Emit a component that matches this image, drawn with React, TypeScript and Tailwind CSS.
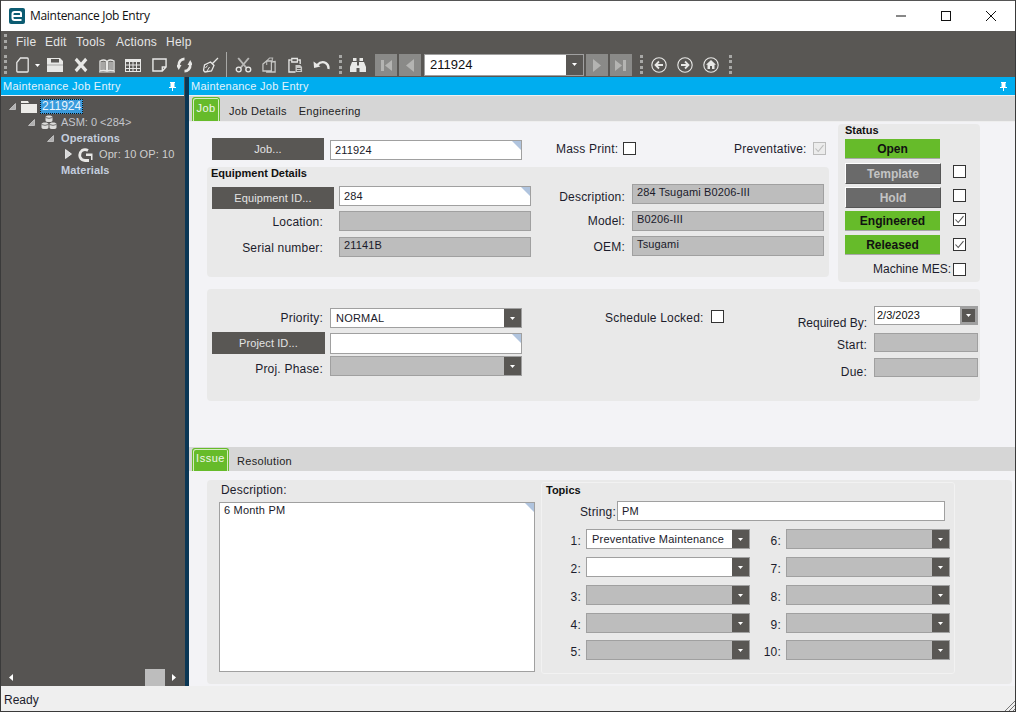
import React from "react";

const F = "#e8e8e6";

function Grip({ className = "" }: { className?: string }) {
  return <div className={"w-[3px] border-l-[3px] border-dotted border-[#a8a8a6] " + className} />;
}

function Tri({ className = "" }: { className?: string }) {
  return (
    <svg viewBox="0 0 5 3" className={"w-[5px] h-[3px] " + className}>
      <path d="M0 0h5L2.5 3z" fill="#fff" />
    </svg>
  );
}

function Ico({ w, ml, children }: { w: string; ml: string; children: React.ReactNode }) {
  return (
    <svg viewBox="0 0 16 16" preserveAspectRatio="none" className={w + " " + ml + " h-[16px] shrink-0"}>
      {children}
    </svg>
  );
}

function NavBtn({ ml, children }: { ml: string; children: React.ReactNode }) {
  return (
    <div className={ml + " w-[22px] h-[22px] bg-[#8a8a88] flex items-center justify-center shrink-0"}>
      <svg viewBox="0 0 16 16" className="w-[16px] h-[16px]">
        {children}
      </svg>
    </div>
  );
}

function Corner() {
  return <div className="absolute top-0 right-0 w-[9px] h-[9px] bg-[#b0c4de] [clip-path:polygon(0_0,100%_0,100%_100%)]" />;
}

function Field({
  className = "",
  text = "",
  gray = false,
  corner = false,
  center = true,
}: {
  className?: string;
  text?: string;
  gray?: boolean;
  corner?: boolean;
  center?: boolean;
}) {
  return (
    <div
      className={
        "relative shrink-0 border border-[#a0a0a0] px-[4px] text-[11px] leading-[14px] tracking-[0.15px] text-[#1a1a2a] flex " +
        (center ? "items-center " : "items-start ") +
        (gray ? "bg-[#bdbdbd] " : "bg-white ") +
        className
      }
    >
      {text}
      {corner && <Corner />}
    </div>
  );
}

function Select({ className = "", text = "", gray = false }: { className?: string; text?: string; gray?: boolean }) {
  return (
    <div
      className={
        "shrink-0 border border-[#a0a0a0] flex items-stretch text-[11px] tracking-[0.2px] text-[#1a1a2a] " +
        (gray ? "bg-[#bdbdbd] " : "bg-white ") +
        className
      }
    >
      <div className="flex-1 px-[5px] flex items-center whitespace-nowrap overflow-hidden">{text}</div>
      <div className="w-[17px] bg-[#595754] flex items-center justify-center">
        <Tri />
      </div>
    </div>
  );
}

function Label({ className = "", children }: { className?: string; children: React.ReactNode }) {
  return <div className={"shrink-0 text-[12px] leading-[14px] tracking-[0.2px] text-[#1c1c2c] text-right whitespace-nowrap " + className}>{children}</div>;
}

function Dark({ className = "", children }: { className?: string; children: React.ReactNode }) {
  return (
    <div className={"shrink-0 bg-[#595754] text-[#e4e4e4] text-[11px] tracking-[0.1px] flex items-center justify-center " + className}>
      {children}
    </div>
  );
}

function Check({ className = "", checked = false, disabled = false }: { className?: string; checked?: boolean; disabled?: boolean }) {
  return (
    <div
      className={
        "w-[13px] h-[13px] shrink-0 border flex items-center justify-center " +
        (disabled ? "border-[#bcbcbc] bg-[#ececec] " : "border-[#333] bg-white ") +
        className
      }
    >
      {checked && (
        <svg viewBox="0 0 11 11" className="w-[11px] h-[11px]">
          <path d="M1.5 5.5 4.2 8.5 9.5 2.2" fill="none" stroke={disabled ? "#bcbcbc" : "#555"} strokeWidth="1.1" />
        </svg>
      )}
    </div>
  );
}

function StatusBtn({ text, on, className = "" }: { text: string; on: boolean; className?: string }) {
  return on ? (
    <div className={"w-[95px] h-[20px] bg-[#66bb2a] border-b border-[#a8a8a8] text-[12px] font-bold text-[#111] flex items-center justify-center shrink-0 " + className}>
      {text}
    </div>
  ) : (
    <div
      className={
        "w-[96px] h-[21px] bg-[#6a6a6a] border-t border-l border-white border-r border-b border-r-[#555] border-b-[#555] text-[12px] font-bold text-[#c4c4c4] flex items-center justify-center shrink-0 " +
        className
      }
    >
      {text}
    </div>
  );
}

function ActiveTab({ className = "", text }: { className?: string; text: string }) {
  return (
    <div
      className={
        "bg-[#66bb2a] border border-[#66bb2a] border-b-0 rounded-t-[3px] shadow-[inset_1px_1px_0_#d4ecc0,inset_-1px_0_0_#d4ecc0] text-[#f0f6ea] text-[11px] tracking-[0.5px] flex items-center justify-center pb-[3px] shrink-0 " +
        className
      }
    >
      {text}
    </div>
  );
}

function TreeArrow() {
  return (
    <svg viewBox="0 0 7 7" className="w-[7px] h-[7px] shrink-0">
      <path d="M6.5.5v6h-6z" fill="#b0b0b0" stroke="#e0e0e0" strokeWidth=".6" />
    </svg>
  );
}

function DockHeader() {
  return (
    <div className="h-[18px] shrink-0 bg-[#00adef] flex items-center justify-between pl-[2px] pr-[8px] text-[11px] tracking-[0.25px] text-[#e4f4fc]">
      <span>Maintenance Job Entry</span>
      <svg viewBox="0 0 7 9" className="w-[7px] h-[9px]">
        <path d="M1 0h5v1h-.5v4H7v1H4v3H3V6H0V5h1.500V1H1z" fill="#fff" />
      </svg>
    </div>
  );
}

function TopicCol({ labels, grays, lx, first }: { labels: string[]; grays: boolean[]; lx: string; first?: string }) {
  const mts = ["", "mt-[8px]", "mt-[8px]", "mt-[8px]", "mt-[7px]"];
  return (
    <div className={"flex flex-col " + lx}>
      {labels.map((l, i) => (
        <div key={l} className={"flex items-center " + mts[i]}>
          <Label className="w-[28px] translate-y-[2px]">{l}</Label>
          <Select className="w-[164px] h-[20px] ml-[5px]" gray={grays[i]} text={i === 0 ? first : ""} />
        </div>
      ))}
    </div>
  );
}

export default function App() {
  return (
    <div className="w-[1016px] h-[712px] overflow-hidden flex flex-col bg-white border-l border-r border-b border-[#3a3a3a] font-['Liberation_Sans',Arial,sans-serif]">
      {/* title bar */}
      <div className="h-[31px] shrink-0 flex items-center border-t border-[#555] bg-white">
        <svg viewBox="0 0 16 16" className="w-[16px] h-[16px] ml-[8px]">
          <rect width="16" height="16" rx="2" fill="#0c5c72" />
          <path d="M3.5 8h8.5V5.500q0-1.500-1.500-1.500H5.500Q3.500 4 3.500 6v4q0 2 2 2h7" fill="none" stroke="#fff" strokeWidth="2" />
        </svg>
        <div className="ml-[5px] text-[12px] tracking-[-0.3px] text-[#111] font-['Open_Sans',sans-serif]">Maintenance Job Entry</div>
        <div className="flex-1" />
        <svg viewBox="0 0 10 10" className="w-[10px] h-[10px] mr-[35px]">
          <path d="M0 5h10" stroke="#111" />
        </svg>
        <svg viewBox="0 0 10 10" className="w-[10px] h-[10px] mr-[35px]">
          <rect x=".5" y=".5" width="9" height="9" fill="none" stroke="#111" />
        </svg>
        <svg viewBox="0 0 10 10" className="w-[10px] h-[10px] mr-[19px]">
          <path d="M0 0l10 10M10 0L0 10" stroke="#111" strokeWidth="1" />
        </svg>
      </div>
      {/* menu */}
      <div className="h-[21px] shrink-0 bg-[#595754] flex items-center pl-[3px] text-[12px] tracking-[0.25px] text-[#e6e6e6]">
        <Grip className="h-[15px]" />
        <span className="ml-[9px] w-[29px]">File</span>
        <span className="w-[31px]">Edit</span>
        <span className="w-[40px]">Tools</span>
        <span className="w-[50px]">Actions</span>
        <span>Help</span>
      </div>
      {/* toolbar */}
      <div className="h-[25px] shrink-0 bg-[#595754] flex items-center pl-[3px]">
        <Grip className="h-[19px]" />
        <Ico w="w-[13px]" ml="ml-[9px]">
          <path d="M5.500 1H14q1 0 1 1v12q0 1-1 1H2q-1 0-1-1V5.500z" fill="none" stroke={F} strokeWidth="1.600" />
        </Ico>
        <Tri className="ml-[6px] mt-[2px]" />
        <Ico w="w-[16px]" ml="ml-[7px]">
          <path d="M0 1h13l3 3v11H0zM4 2v3.500h8V2z" fillRule="evenodd" fill={F} />
          <path d="M0 8h16" stroke="#8a8a88" strokeWidth=".7" />
        </Ico>
        <Ico w="w-[14px]" ml="ml-[11px]">
          <path d="M2 2l12 12M14 2L2 14" stroke={F} strokeWidth="3.600" />
        </Ico>
        <Ico w="w-[16px]" ml="ml-[11px]">
          <path d="M1 4q4-2 6.400 0v10Q4 12.500 1 14zM15 4q-4-2-6.400 0v10q3-1.500 6.400 0z" fill="none" stroke={F} strokeWidth="1.300" />
          <path d="M2 5q3-1 4.500 0v8Q4 12 2 12.800zM14 5q-3-1-4.500 0v8q2.500-1 4.500-.2z" fill={F} opacity=".55" />
          <path d="M0 15h16" stroke={F} />
        </Ico>
        <Ico w="w-[16px]" ml="ml-[10px]">
          <path d="M0 2h16v13H0zM1 5v2.500h3V5zM5 5v2.500h2.500V5zM8.500 5v2.500H11V5zM12 5v2.500h3V5zM1 8.500V11h3V8.500zM5 8.500V11h2.500V8.500zM8.500 8.500V11H11V8.500zM12 8.500V11h3V8.500zM1 12v2h3v-2zM5 12v2h2.500v-2zM8.500 12v2H11v-2zM12 12v2h3v-2z" fillRule="evenodd" fill={F} />
        </Ico>
        <Ico w="w-[15px]" ml="ml-[11px]">
          <path d="M1 2h14v8l-4 4H1zM11 14v-4h4" fill="none" stroke={F} strokeWidth="1.500" />
        </Ico>
        <Ico w="w-[15px]" ml="ml-[10px]">
          <path d="M8 1.800A6.300 6.300 0 0 0 1.800 8.500" fill="none" stroke={F} strokeWidth="2.800" />
          <path d="M-1 8h5.800L1.900 13z" fill={F} />
          <path d="M8 14.200A6.300 6.300 0 0 0 14.200 7.500" fill="none" stroke={F} strokeWidth="2.800" />
          <path d="M17 8h-5.800L14.100 3z" fill={F} />
        </Ico>
        <Ico w="w-[16px]" ml="ml-[11px]">
          <path d="M15 1 9.500 6.500M7.500 5 11 8.500 8.500 14 2 15l-1.500-1.500 1-5.500z" fill="none" stroke={F} strokeWidth="1.300" />
          <path d="M4 14l2.500-4M2.500 11l2-2.500" stroke={F} />
        </Ico>
        <div className="w-px h-[25px] ml-[7px] bg-[#a8a8a6] shrink-0" />
        <Ico w="w-[17px]" ml="ml-[8px]">
          <path d="M3 1l7.500 9.500M13 1 5.500 10.500" stroke="#b8b8b6" strokeWidth="1.800" />
          <circle cx="3.500" cy="12.500" r="2.300" fill="none" stroke={F} strokeWidth="1.300" />
          <circle cx="12.500" cy="12.500" r="2.300" fill="none" stroke={F} strokeWidth="1.300" />
        </Ico>
        <Ico w="w-[15px]" ml="ml-[10px]">
          <path d="M5 4 8 1h3v3M5 4v4M11 1l1 0" fill="none" stroke="#b8b8b6" strokeWidth="1.200" />
          <path d="M1 7l4-3h5v10H1zM10 5l4-.5V15H5v-1" fill="none" stroke="#c8c8c6" strokeWidth="1.300" />
        </Ico>
        <Ico w="w-[15px]" ml="ml-[11px]">
          <path d="M3 3H1v12h7M11 3h2v4" fill="none" stroke={F} strokeWidth="1.400" />
          <path d="M4 1.500h6V5H4z" fill="none" stroke={F} strokeWidth="1.300" />
          <path d="M8 8h5l2 2v5H8zM9.500 11h4v1h-4zM9.500 13h4v1h-4z" fillRule="evenodd" fill="#c8c8c6" />
        </Ico>
        <Ico w="w-[17px]" ml="ml-[10px]">
          <path d="M4 8Q8 3.500 12 6q3 2 2.500 6" fill="none" stroke={F} strokeWidth="2.200" />
          <path d="M0.500 4.500 1 11l6-1.500z" fill={F} />
        </Ico>
        <Grip className="h-[19px] ml-[9px]" />
        <Ico w="w-[16px]" ml="ml-[8px]">
          <path d="M3 1h3.500v3H3zM9.500 1H13v3H9.500zM2 5h5v3.500h2V5h5l2 5v5H9.500v-4h-3v4H0v-5z" fill={F} />
        </Ico>
        <NavBtn ml="ml-[9px]">
          <path d="M3 3h3v11H3zM14 3v11L7 8.500z" fill="#b4b4b2" />
        </NavBtn>
        <NavBtn ml="ml-[2px]">
          <path d="M12 2v13L4 8.500z" fill="#b4b4b2" />
        </NavBtn>
        <div className="ml-[3px] w-[160px] h-[22px] border border-[#a0a0a0] bg-white flex items-stretch shrink-0">
          <div className="flex-1 pl-[5px] flex items-center text-[13px] text-[#111]">211924</div>
          <div className="w-[17px] bg-[#595754] flex items-center justify-center">
            <Tri />
          </div>
        </div>
        <NavBtn ml="ml-[2px]">
          <path d="M4 2v13l8-6.500z" fill="#b4b4b2" />
        </NavBtn>
        <NavBtn ml="ml-[2px]">
          <path d="M13 3h-3v11h3zM2 3v11l7-5.500z" fill="#b4b4b2" />
        </NavBtn>
        <Grip className="h-[19px] ml-[8px]" />
        <Ico w="w-[16px]" ml="ml-[8px]">
          <circle cx="8" cy="8" r="7.200" fill="none" stroke={F} strokeWidth="1.100" />
          <path d="M12 8H5M8 4.500 4.500 8 8 11.500" fill="none" stroke={F} strokeWidth="1.800" />
        </Ico>
        <Ico w="w-[16px]" ml="ml-[10px]">
          <circle cx="8" cy="8" r="7.200" fill="none" stroke={F} strokeWidth="1.100" />
          <path d="M4 8h7M8 4.500 11.500 8 8 11.500" fill="none" stroke={F} strokeWidth="1.800" />
        </Ico>
        <Ico w="w-[16px]" ml="ml-[10px]">
          <circle cx="8" cy="8" r="7.200" fill="none" stroke={F} strokeWidth="1.100" />
          <path d="M8 3 3 7.800h1.500V12h2.500V9h2v3h2.500V7.800H13z" fill={F} />
        </Ico>
        <Grip className="h-[19px] ml-[10px]" />
      </div>
      {/* body */}
      <div className="flex-1 min-h-0 flex">
        {/* left dock */}
        <div className="w-[183px] shrink-0 flex flex-col bg-[#565452]">
          <DockHeader />
          <div className="h-[1px] bg-[#f0f0f0] shrink-0" />
          <div className="flex-1 flex flex-col pt-[2px] text-[11px]">
            <div className="h-[16px] flex items-center pl-[8px]">
              <TreeArrow />
              <svg viewBox="0 0 16 13" className="w-[16px] h-[13px] ml-[5px]">
                <path d="M0 1h7l1 2H0zM0 4h16v9H0z" fill="#ecebe8" />
              </svg>
              <span className="ml-[3px] bg-[#3a9bdc] text-[#e8f4fc] border border-dotted border-[#111] px-px h-[15px] leading-[13px] text-[12px]">211924</span>
            </div>
            <div className="h-[16px] flex items-center pl-[27px] text-[#c4c6cc]">
              <TreeArrow />
              <svg viewBox="0 0 16 15" className="w-[16px] h-[15px] ml-[6px]">
                <path d="M8 .5c2 0 3.500.7 3.500 1.500v3.500C11.500 6.500 10 7 8 7s-3.500-.5-3.500-1.500V2C4.500 1.200 6 .5 8 .5zM4 7.500c2 0 3.500.7 3.500 1.500v3.500C7.500 13.500 6 14 4 14s-3.500-.5-3.500-1.500V9C.5 8.200 2 7.500 4 7.500zM12 7.500c2 0 3.500.7 3.500 1.500v3.500c0 1-1.500 1.500-3.500 1.500s-3.500-.5-3.500-1.500V9c0-.8 1.500-1.500 3.500-1.500z" fill="#dcdcda" />
                <path d="M4.500 2.500Q8 4.200 11.500 2.500M.5 9.500Q4 11.200 7.500 9.500M8.500 9.500Q12 11.200 15.500 9.500" fill="none" stroke="#565452" strokeWidth=".8" />
              </svg>
              <span className="ml-[4px]">ASM: 0 &lt;284&gt;</span>
            </div>
            <div className="h-[16px] flex items-center pl-[46px] font-bold tracking-[0.1px] text-[#c4cede]">
              <TreeArrow />
              <span className="ml-[7px]">Operations</span>
            </div>
            <div className="h-[16px] flex items-center pl-[64px] text-[#cfcfcf]">
              <svg viewBox="0 0 7 10" className="w-[7px] h-[10px]">
                <path d="M.5.5l6 4.500-6 4.500z" fill="#d8d8d8" stroke="#fff" strokeWidth=".7" />
              </svg>
              <svg viewBox="0 0 15 15" className="w-[15px] h-[15px] ml-[6px]">
                <path d="M10 3.500Q7 1.800 4 3.500 1 6 2 10q1.500 3.500 5 3.500h4" fill="none" stroke="#e8e8e6" strokeWidth="2.800" />
                <path d="M8 6.500h6.500V13H13V9H8z" fill="#e8e8e6" />
              </svg>
              <span className="ml-[6px] text-[11px] tracking-[0.1px]">Opr: 10 OP: 10</span>
            </div>
            <div className="h-[16px] flex items-center pl-[60px] font-bold tracking-[0.1px] text-[#c4cede]">Materials</div>
            <div className="flex-1" />
            <div className="h-[17px] flex items-center">
              <svg viewBox="0 0 4 7" className="w-[4px] h-[7px] ml-[8px]">
                <path d="M4 0v7L0 3.500z" fill="#fff" />
              </svg>
              <div className="flex-1" />
              <div className="w-[20px] h-[17px] bg-[#bdbdbd]" />
              <svg viewBox="0 0 4 7" className="w-[4px] h-[7px] ml-[7px] mr-[8px]">
                <path d="M0 0v7l4-3.500z" fill="#fff" />
              </svg>
            </div>
          </div>
        </div>
        {/* splitter */}
        <div className="w-[5px] shrink-0 bg-[#0a3654] border-l border-[#565452]" />
        {/* main */}
        <div className="flex-1 min-w-0 flex flex-col bg-[#f3f3f6]">
          <DockHeader />
          <div className="h-[1px] bg-[#f0f0f0] shrink-0" />
          {/* tabs 1 */}
          <div className="h-[26px] shrink-0 bg-[#d6d6d6] flex items-end pl-[3px] border-b border-[#eeeeee] text-[11px] tracking-[0.3px] text-[#222]">
            <ActiveTab className="w-[28px] h-[24px]" text="Job" />
            <span className="ml-[9px] mb-[2px]">Job Details</span>
            <span className="ml-[12px] mb-[2px]">Engineering</span>
          </div>
          {/* upper area */}
          <div className="h-[325px] shrink-0 pl-[18px] flex flex-col">
            <div className="h-[160px] shrink-0 flex">
              <div className="w-[622px] shrink-0">
                <div className="h-[23px] mt-[16px] pl-[5px] flex items-start">
                  <Dark className="w-[112px] h-[22px]">Job...</Dark>
                  <Field className="w-[192px] h-[20px] ml-[6px] mt-[2px]" text="211924" corner />
                  <Label className="w-[60px] ml-[34px] mt-[4px]">Mass Print:</Label>
                  <Check className="ml-[7px] mt-[4px]" />
                  <Label className="w-[71px] ml-[98px] mt-[4px]">Preventative:</Label>
                  <Check className="ml-[8px] mt-[4px]" checked disabled />
                </div>
                <div className="h-[110px] mt-[6px] bg-[#e9e9e9] rounded-[4px] pl-[4px]">
                  <div className="text-[11px] font-bold text-[#111] leading-[13px] h-[18px]">Equipment Details</div>
                  <div className="flex">
                    <div className="w-[317px] shrink-0 pl-[1px]">
                      <div className="flex items-start">
                        <Dark className="w-[122px] h-[22px] mt-[2px]">Equipment ID...</Dark>
                        <Field className="w-[192px] h-[20px] ml-[5px] mt-[1px]" text="284" corner />
                      </div>
                      <div className="flex items-center mt-[2px]">
                        <Label className="w-[111px] translate-y-[1px]">Location:</Label>
                        <Field className="w-[192px] h-[20px] ml-[16px]" gray />
                      </div>
                      <div className="flex items-center mt-[6px]">
                        <Label className="w-[111px] translate-y-[1px]">Serial number:</Label>
                        <Field className="w-[192px] h-[20px] ml-[16px]" gray center={false} text="21141B" />
                      </div>
                    </div>
                    <div className="flex-1 -mt-[1px]">
                      <div className="flex items-center">
                        <Label className="w-[97px] translate-y-[3px]">Description:</Label>
                        <Field className="w-[192px] h-[20px] ml-[7px]" gray center={false} text="284 Tsugami B0206-III" />
                      </div>
                      <div className="flex items-center mt-[7px]">
                        <Label className="w-[97px]">Model:</Label>
                        <Field className="w-[192px] h-[20px] ml-[7px]" gray center={false} text="B0206-III" />
                      </div>
                      <div className="flex items-center mt-[5px]">
                        <Label className="w-[97px] translate-y-[1px]">OEM:</Label>
                        <Field className="w-[192px] h-[20px] ml-[7px]" gray center={false} text="Tsugami" />
                      </div>
                    </div>
                  </div>
                </div>
              </div>
              {/* status */}
              <div className="w-[142px] h-[158px] mt-[2px] ml-[9px] shrink-0 bg-[#e9e9e9] rounded-[4px] pl-[7px]">
                <div className="text-[11px] font-bold text-[#111] h-[13px] leading-[13px]">Status</div>
                <StatusBtn text="Open" on className="mt-[2px]" />
                <div className="flex items-start mt-[4px]">
                  <StatusBtn text="Template" on={false} />
                  <Check className="ml-[12px] mt-[2px]" />
                </div>
                <div className="flex items-start mt-[3px]">
                  <StatusBtn text="Hold" on={false} />
                  <Check className="ml-[12px] mt-[2px]" />
                </div>
                <div className="flex items-start mt-[3px]">
                  <StatusBtn text="Engineered" on />
                  <Check className="ml-[13px] mt-[2px]" checked />
                </div>
                <div className="flex items-start mt-[4px]">
                  <StatusBtn text="Released" on />
                  <Check className="ml-[13px] mt-[3px]" checked />
                </div>
                <div className="flex items-center justify-end mt-[7px] pr-[14px]">
                  <Label className="tracking-[0px]">Machine MES:</Label>
                  <Check className="ml-[2px]" />
                </div>
              </div>
            </div>
            {/* section 2 */}
            <div className="w-[773px] h-[112px] mt-[7px] bg-[#e9e9e9] rounded-[4px] flex">
              <div className="w-[315px] ml-[5px] shrink-0">
                <div className="flex items-center mt-[19px]">
                  <Label className="w-[111px]">Priority:</Label>
                  <Select className="w-[192px] h-[20px] ml-[7px]" text="NORMAL" />
                </div>
                <div className="flex items-start mt-[4px]">
                  <Dark className="w-[113px] h-[22px]">Project ID...</Dark>
                  <Field className="w-[192px] h-[21px] ml-[5px] mt-[1px]" corner />
                </div>
                <div className="flex items-center mt-[2px]">
                  <Label className="w-[111px] translate-y-[3px]">Proj. Phase:</Label>
                  <Select className="w-[192px] h-[20px] ml-[7px]" gray />
                </div>
              </div>
              <div className="flex items-start mt-[20px] ml-[78px] shrink-0">
                <Label className="w-[98px] mt-[2px]">Schedule Locked:</Label>
                <Check className="ml-[8px] mt-px" />
              </div>
              <div className="ml-[13px] shrink-0">
                <div className="flex items-start mt-[17px] h-[19px]">
                  <Label className="w-[130px] mt-[10px] tracking-[0px]">Required By:</Label>
                  <div className="w-[104px] h-[19px] ml-[7px] border border-[#a0a0a0] bg-white flex items-stretch text-[11px] text-[#111]">
                    <div className="flex-1 pl-[2px] flex items-center">2/3/2023</div>
                    <div className="w-[17px] bg-[#595754] border-[2px] border-[#a0a0a0] flex items-center justify-center">
                      <Tri />
                    </div>
                  </div>
                </div>
                <div className="flex items-center mt-[8px]">
                  <Label className="w-[130px] translate-y-[2px]">Start:</Label>
                  <Field className="w-[104px] h-[19px] ml-[7px]" gray />
                </div>
                <div className="flex items-center mt-[6px]">
                  <Label className="w-[130px] translate-y-[4px]">Due:</Label>
                  <Field className="w-[104px] h-[19px] ml-[7px]" gray />
                </div>
              </div>
            </div>
          </div>
          {/* tabs 2 */}
          <div className="h-[24px] shrink-0 bg-[#d6d6d6] flex items-end pl-[3px] text-[11px] tracking-[0.3px] text-[#222]">
            <ActiveTab className="w-[37px] h-[23px]" text="Issue" />
            <span className="ml-[8px] mb-[2px]">Resolution</span>
          </div>
          {/* lower */}
          <div className="flex-1 min-h-0 pl-[18px] pt-[9px] flex items-start">
            <div className="w-[805px] h-[204px] bg-[#e9e9e9] rounded-[4px] flex">
              <div className="w-[316px] ml-[12px] shrink-0">
                <div className="h-[22px] pl-[2px] pb-[2px] flex items-center text-[12px] tracking-[0.2px] text-[#1c1c2c]">Description:</div>
                <div className="relative h-[170px] border border-[#a0a0a0] bg-white px-[4px] text-[11px] tracking-[0.2px] leading-[14px] text-[#1a1a2a]">
                  6 Month PM
                  <Corner />
                </div>
              </div>
              <div className="w-[414px] h-[192px] ml-[6px] mt-[2px] border border-[#f2f2f2] rounded-[3px] shrink-0">
                <div className="text-[11px] font-bold text-[#111] pl-[4px] h-[18px] leading-[14px]">Topics</div>
                <div className="flex items-center ml-[1px]">
                  <Label className="w-[73px] translate-y-[1px]">String:</Label>
                  <Field className="w-[328px] h-[20px] ml-[1px]" text="PM" />
                </div>
                <div className="flex mt-[8px] ml-[11px]">
                  <TopicCol labels={["1:", "2:", "3:", "4:", "5:"]} grays={[false, false, true, true, true]} lx="" first="Preventative Maintenance" />
                  <TopicCol labels={["6:", "7:", "8:", "9:", "10:"]} grays={[true, true, true, true, true]} lx="ml-[3px]" />
                </div>
              </div>
            </div>
          </div>
        </div>
      </div>
      {/* status bar */}
      <div className="h-[25px] shrink-0 bg-[#efefef] flex items-center justify-between pl-[3px] text-[12px] text-[#1c1c2c]">
        <span className="pt-[2px]">Ready</span>
        <svg viewBox="0 0 11 11" className="w-[11px] h-[11px] self-end">
          <path d="M11 1 1 11M11 5l-6 6M11 9l-2 2" stroke="#777" />
        </svg>
      </div>
    </div>
  );
}
